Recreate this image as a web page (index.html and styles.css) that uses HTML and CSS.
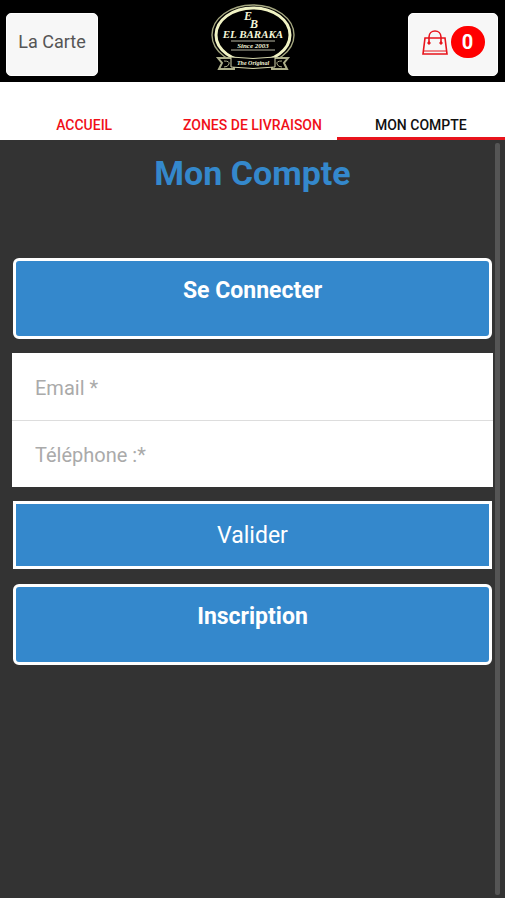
FILE: index.html
```html
<!DOCTYPE html>
<html lang="fr">
<head>
  <meta charset="UTF-8" />
  <meta name="viewport" content="width=device-width, initial-scale=1.0"/>
  <title>El Baraka - Mon Compte</title>
  <link rel="stylesheet" href="styles.css">
</head>
<body>
  <div class="app">
    <header class="topbar">
      <button type="button" class="top-btn">La Carte</button>
      <svg class="logo" viewBox="0 0 84 68" role="img" aria-label="El Baraka">
        <ellipse cx="42" cy="32" rx="41" ry="30" fill="none" stroke="#a5a780" stroke-width="1.4"/>
        <ellipse cx="42" cy="32" rx="37" ry="27" fill="none" stroke="#f1f3c4" stroke-width="3"/>
        <path d="M20 38h44M20 47h44" stroke="#b9b9a4" stroke-width="1"/>
        <path d="M23 55H7l4 5-3 6h15zM61 55h16l-4 5 3 6H61z" fill="#000" stroke="#aeb08b" stroke-width="2"/>
        <path d="M13 58q6 0 5 3t-5 3M71 58q-6 0-5 3t5 3" fill="none" stroke="#aeb08b"/>
        <path d="M20 54q22 3 44 0v10q-22 3-44 0z" fill="#000" stroke="#d5d7ad" stroke-width="1"/>
        <g fill="#f4f5d8" text-anchor="middle" class="logo-text">
          <text x="37" y="17" font-size="12">E</text>
          <text x="43" y="25" font-size="12">B</text>
          <text x="42" y="35" font-size="11">EL BARAKA</text>
          <text x="42" y="45" font-size="7">Since 2003</text>
          <text x="42" y="62" font-size="6">The Original</text>
        </g>
      </svg>
      <button type="button" class="top-btn cart" aria-label="Panier">
        <svg class="bag" viewBox="0 0 26 28" fill="none" stroke="#e8141c">
          <path d="M3 10h20l2 16H1z" stroke-width="1.6"/>
          <path d="M2 23h22" stroke-width="1"/>
          <path d="M7 15V9c0-8 12-8 12 0v6" stroke-width="1.6"/>
          <circle cx="7" cy="15" r="1.2" fill="#e8141c"/>
          <circle cx="19" cy="15" r="1.2" fill="#e8141c"/>
        </svg>
        <span class="badge">0</span>
      </button>
    </header>

    <nav class="tabs">
      <a href="#">ACCUEIL</a>
      <a href="#">ZONES DE LIVRAISON</a>
      <a href="#" class="active">MON COMPTE</a>
    </nav>

    <main class="content">
      <h1>Mon Compte</h1>
      <button type="button" class="btn btn-tall">Se Connecter</button>
      <form class="login">
        <div class="fields">
          <input type="email" placeholder="Email *" aria-label="Email">
          <input type="tel" placeholder="Téléphone :*" aria-label="Téléphone">
        </div>
        <button type="button" class="btn btn-submit">Valider</button>
      </form>
      <button type="button" class="btn btn-tall">Inscription</button>
      <div class="scroll-thumb"></div>
    </main>
  </div>
</body>
</html>
```

FILE: styles.css
```css
* {
  box-sizing: border-box;
}
body {
  margin: 0;
  background: #fff;
  font-family: Roboto, "Liberation Sans", sans-serif;
}
button,
input {
  font-family: inherit;
}
.app {
  display: flex;
  flex-direction: column;
  min-height: 100vh;
  padding: 0 2px 2px 0;
}

/* top bar */
.topbar {
  display: flex;
  justify-content: space-between;
  height: 82px;
  padding: 0 7px 0 6px;
  background: #000;
}
.top-btn {
  width: 92px;
  height: 63px;
  margin-top: 13px;
  padding: 0 0 6px;
  border: 1px solid #fff;
  border-radius: 5px;
  background: #f7f7f7;
  color: #555;
  font-size: 18px;
  white-space: nowrap;
}
.logo {
  width: 84px;
  height: 68px;
  margin-top: 3px;
}
.logo-text {
  font-family: "Liberation Serif", serif;
  font-style: italic;
  font-weight: bold;
}
.cart {
  display: flex;
  align-items: center;
  justify-content: center;
  gap: 3px;
  width: 90px;
}
.bag {
  width: 26px;
  height: 28px;
}
.badge {
  width: 34px;
  border-radius: 16px;
  background: #f00;
  color: #fff;
  font-size: 20px;
  font-weight: bold;
  line-height: 32px;
}

/* tabs */
.tabs {
  display: grid;
  grid-template-columns: repeat(3, 1fr);
  height: 58px;
}
.tabs a {
  padding-top: 33px;
  border-bottom: 3px solid transparent;
  color: #f01018;
  font-size: 14px;
  font-weight: 500;
  line-height: 20px;
  text-align: center;
  text-decoration: none;
  white-space: nowrap;
}
.tabs .active {
  border-bottom-color: #e8141c;
  color: #111;
}

/* account page */
.content {
  position: relative;
  flex: 1;
  padding: 13px 12px 12px;
  background: #333;
}
h1 {
  margin: 0 0 65px;
  color: #3488cc;
  font-size: 34px;
  line-height: 40px;
  text-align: center;
}
.btn {
  display: block;
  width: calc(100% - 2px);
  margin: 0 1px;
  border: 3px solid #fff;
  background: #3488cc;
  color: #fff;
  font-size: 23px;
}
.btn-tall {
  height: 81px;
  padding: 0 0 16px;
  border-radius: 6px;
  font-weight: bold;
}
.btn-submit {
  height: 68px;
  padding: 0;
}
.login {
  margin: 14px 0 15px;
}
.fields {
  margin-bottom: 14px;
}
.fields input {
  display: block;
  width: 100%;
  height: 67px;
  padding: 2px 23px 0;
  border: 0;
  border-radius: 0;
  background: #fff;
  color: #333;
  font-size: 20px;
}
.fields input + input {
  border-top: 1px solid #ddd;
}
.fields input::placeholder {
  color: #aaa;
}
.scroll-thumb {
  position: absolute;
  top: 3px;
  right: 5px;
  bottom: 3px;
  width: 5px;
  border-radius: 2px;
  background: #555;
}
```
